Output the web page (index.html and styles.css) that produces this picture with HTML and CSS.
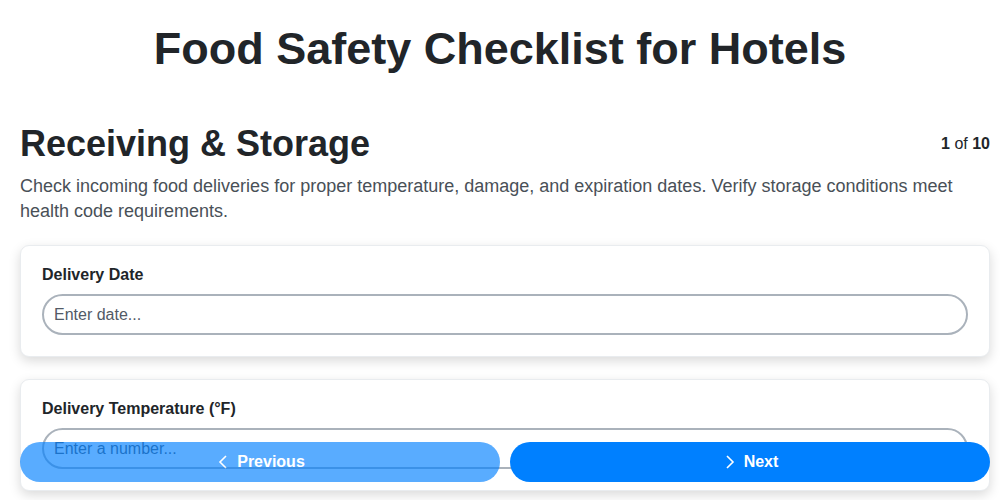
FILE: index.html
```html
<!DOCTYPE html>
<html lang="en">
<head>
    <meta charset="UTF-8">
    <meta name="viewport" content="width=device-width, initial-scale=1.0">
    <title>Food Safety Checklist for Hotels</title>
    <link rel="stylesheet" href="styles.css">
</head>
<body>
    <h1 class="page-title">Food Safety Checklist for Hotels</h1>

    <div class="step">
        <div class="step-header">
            <h2 class="step-title">Receiving &amp; Storage</h2>
            <div class="step-count"><b>1</b> of <b>10</b></div>
        </div>
        <p class="step-desc">Check incoming food deliveries for proper temperature, damage, and expiration dates. Verify storage conditions meet health code requirements.</p>

        <div class="field-card">
            <label class="field-label" for="delivery-date">Delivery Date</label>
            <input class="field-input" id="delivery-date" type="text" placeholder="Enter date...">
        </div>

        <div class="field-card">
            <label class="field-label" for="delivery-temp">Delivery Temperature (°F)</label>
            <input class="field-input" id="delivery-temp" type="text" placeholder="Enter a number...">
        </div>
    </div>

    <div class="nav-bar">
        <button class="nav-button" disabled>
            <svg width="16" height="16" viewBox="0 0 16 16"><path d="M11 2 L5 8 L11 14" fill="none" stroke="currentColor" stroke-width="1.6"/></svg>
            Previous
        </button>
        <button class="nav-button">
            <svg width="16" height="16" viewBox="0 0 16 16"><path d="M5 2 L11 8 L5 14" fill="none" stroke="currentColor" stroke-width="1.6"/></svg>
            Next
        </button>
    </div>
</body>
</html>
```

FILE: styles.css
```css
body {
    font-family: 'Liberation Sans', Arial, sans-serif;
    margin: 0;
    background-color: #fff;
    color: #212529;
}

.page-title {
    text-align: center;
    font-size: 45px;
    margin: 21px 0 45px;
    line-height: 56px;
}

.step {
    padding: 0 10px 0 20px;
}

.step-header {
    display: flex;
    justify-content: space-between;
    align-items: center;
}

.step-title {
    font-size: 36px;
    margin: 0;
    line-height: 44px;
}

.step-count {
    font-size: 16px;
    color: #212529;
}

.step-desc {
    font-size: 18px;
    line-height: 25px;
    color: #495057;
    margin: 8px 0 21px;
}

.field-card {
    background: #fff;
    border: 1px solid #e9ecef;
    border-radius: 9px;
    padding: 20px 21px 21px;
    margin-bottom: 22px;
    box-shadow: 0 4px 12px rgba(0, 0, 0, 0.15);
}

.field-label {
    display: block;
    font-size: 16px;
    font-weight: bold;
    margin-bottom: 10px;
}

.field-input {
    display: block;
    width: 100%;
    box-sizing: border-box;
    height: 41px;
    padding: 0 10px;
    border: 2px solid #aab2bb;
    border-radius: 21px;
    font-family: inherit;
    font-size: 16px;
    color: #212529;
    outline: none;
}

.field-input::placeholder {
    color: #525a66;
}

.nav-bar {
    position: fixed;
    left: 20px;
    right: 10px;
    bottom: 18px;
    display: flex;
    gap: 10px;
}

.nav-button {
    flex: 1;
    height: 40px;
    border: none;
    border-radius: 20px;
    background-color: #0080ff;
    color: #fff;
    font-family: inherit;
    font-size: 16px;
    font-weight: bold;
    display: flex;
    justify-content: center;
    align-items: center;
    gap: 6px;
    cursor: pointer;
}

.nav-button:disabled {
    opacity: 0.65;
    cursor: default;
}
```
